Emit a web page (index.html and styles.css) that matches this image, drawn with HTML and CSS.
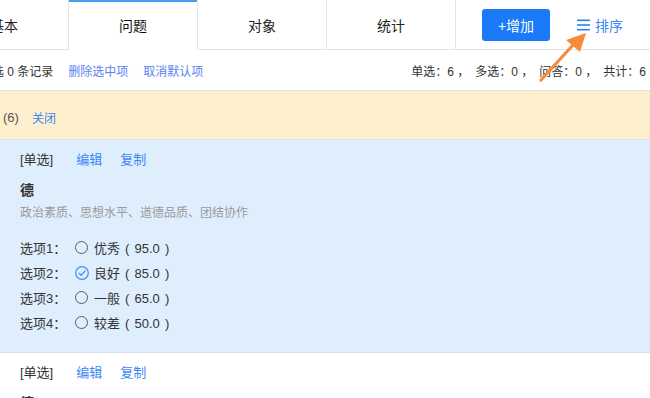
FILE: index.html
```html
<!DOCTYPE html>
<html lang="zh-CN">
<head>
<meta charset="utf-8">
<title>问题</title>
<link rel="stylesheet" href="styles.css">
</head>
<body>
<div class="header">
  <div class="tabs">
    <div class="tab">基本</div>
    <div class="tab active">问题</div>
    <div class="tab">对象</div>
    <div class="tab">统计</div>
  </div>
  <div class="actions">
    <button class="btn-add">+增加</button>
    <a class="sort">
      <svg class="sort-icon" width="13" height="12" viewBox="0 0 13 12"><rect x="0" y="0.5" width="13" height="1.6" fill="#2f7ef5"/><rect x="0" y="5.2" width="13" height="1.6" fill="#2f7ef5"/><rect x="0" y="9.9" width="13" height="1.6" fill="#2f7ef5"/></svg>
      <span>排序</span>
    </a>
  </div>
</div>

<div class="toolbar">
  <div class="toolbar-left">
    <span class="count">已选 0 条记录</span>
    <a class="link">删除选中项</a>
    <a class="link">取消默认项</a>
  </div>
  <div class="stats">
    <span>单选：6 ，</span><span>多选：0 ，</span><span>问答：0 ，</span><span>共计：6</span>
  </div>
</div>

<div class="notice">
  <span class="notice-count">(6)</span>
  <a class="link">关闭</a>
</div>

<div class="card selected">
  <div class="card-head">
    <span class="qtype">[单选]</span>
    <a class="link">编辑</a>
    <a class="link">复制</a>
  </div>
  <div class="qtitle">德</div>
  <div class="qdesc">政治素质、思想水平、道德品质、团结协作</div>
  <div class="options">
    <div class="option"><span class="opt-label">选项1：</span><span class="radio"></span><span class="opt-text">优秀 ( 95.0 )</span></div>
    <div class="option"><span class="opt-label">选项2：</span><svg class="radio-checked" width="14" height="14" viewBox="0 0 14 14"><circle cx="7" cy="7" r="6.3" fill="none" stroke="#4a8bf5" stroke-width="1.2"/><path d="M3.9 7.1 L6.1 9.2 L10.2 4.9" fill="none" stroke="#4a8bf5" stroke-width="1.3" stroke-linecap="round" stroke-linejoin="round"/></svg><span class="opt-text">良好 ( 85.0 )</span></div>
    <div class="option"><span class="opt-label">选项3：</span><span class="radio"></span><span class="opt-text">一般 ( 65.0 )</span></div>
    <div class="option"><span class="opt-label">选项4：</span><span class="radio"></span><span class="opt-text">较差 ( 50.0 )</span></div>
  </div>
</div>

<div class="card">
  <div class="card-head">
    <span class="qtype">[单选]</span>
    <a class="link">编辑</a>
    <a class="link">复制</a>
  </div>
  <div class="qtitle">德</div>
</div>

<svg class="arrow" width="650" height="398" viewBox="0 0 650 398">
  <line x1="541" y1="80" x2="573" y2="45" stroke="#f68b3c" stroke-width="3.2" stroke-linecap="round"/>
  <polygon points="586,33 566,40 580,52" fill="#f68b3c"/>
</svg>
</body>
</html>
```

FILE: styles.css
```css
html, body {
  margin: 0;
  padding: 0;
}
body {
  width: 650px;
  height: 398px;
  overflow: hidden;
  position: relative;
  background: #fff;
  color: #333;
  font-family: "Liberation Sans", "Noto Sans CJK SC", sans-serif;
}
a { cursor: pointer; }

.header {
  display: flex;
  height: 50px;
}
.tabs {
  display: flex;
  margin-left: -60px;
}
.tab {
  width: 129px;
  height: 50px;
  box-sizing: border-box;
  border-right: 1px solid #e4e4e4;
  border-bottom: 1px solid #e4e4e4;
  display: flex;
  align-items: center;
  justify-content: center;
  font-size: 14px;
  color: #222;
}
.tab.active {
  border-bottom-color: #fff;
  box-shadow: inset 0 2px 0 #4a9bf6;
  color: #111;
}
.actions {
  flex: 1;
  height: 50px;
  box-sizing: border-box;
  border-bottom: 1px solid #e4e4e4;
  display: flex;
  align-items: center;
  padding-left: 26px;
}
.btn-add {
  width: 68px;
  height: 32px;
  border: none;
  border-radius: 3px;
  background: #1a7af8;
  color: #fff;
  font-family: inherit;
  font-size: 14px;
  padding: 0;
}
.sort {
  margin-left: 27px;
  display: flex;
  align-items: center;
  gap: 5px;
  color: #3b86f5;
  font-size: 14px;
}

.toolbar {
  height: 41px;
  box-sizing: border-box;
  border-bottom: 1px solid #e4e4e4;
  display: flex;
  align-items: center;
  justify-content: space-between;
  padding-top: 4px;
  font-size: 12px;
  line-height: 16px;
}
.toolbar-left {
  display: flex;
  gap: 15px;
  margin-left: -20px;
  white-space: nowrap;
}
.count { color: #333; }
.link { color: #3d87f5; }
.toolbar-left .link { color: #5b83f2; }
.stats {
  display: flex;
  gap: 6px;
  padding-right: 4px;
  color: #333;
  white-space: nowrap;
}

.notice {
  height: 49px;
  box-sizing: border-box;
  background: #fdeecd;
  border-bottom: 1px solid #e2e0dc;
  display: flex;
  align-items: center;
  gap: 13px;
  padding-left: 3px;
  padding-top: 4px;
  font-size: 13px;
}
.notice .link { font-size: 12px; }
.notice-count { color: #555; }

.card {
  padding: 10px 20px 17px;
  border-bottom: 1px solid #dcdfe6;
  background: #fff;
}
.card.selected {
  background: #dfeefd;
}
.card-head {
  display: flex;
  gap: 18px;
  font-size: 13px;
  line-height: 20px;
}
.qtype {
  color: #333;
  margin-right: 5px;
  word-spacing: 0;
}
.qtitle {
  margin-top: 10px;
  font-size: 14px;
  line-height: 20px;
  font-weight: bold;
  color: #333;
}
.qdesc {
  margin-top: 4px;
  font-size: 12px;
  line-height: 18px;
  color: #9a9a9a;
}
.options {
  margin-top: 13px;
}
.option {
  display: flex;
  align-items: center;
  height: 25px;
  font-size: 13px;
  color: #333;
}
.opt-label {
  width: 55px;
}
.opt-text {
  word-spacing: 1.5px;
}
.radio {
  width: 13px;
  height: 13px;
  border: 1px solid #5a5a5a;
  border-radius: 50%;
  box-sizing: border-box;
  margin-right: 6px;
}
.radio-checked {
  margin-right: 5px;
}

.arrow {
  position: absolute;
  left: 0;
  top: 0;
  pointer-events: none;
}
```
